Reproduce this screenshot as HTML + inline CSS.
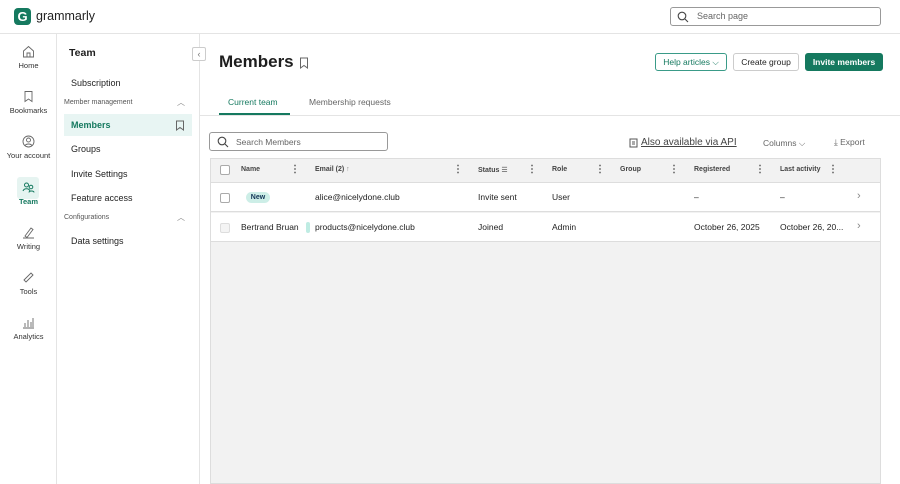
<!DOCTYPE html>
<html><head><style>
*{box-sizing:border-box;margin:0;padding:0}
body{width:900px;height:484px;overflow:hidden;font-family:"Liberation Sans",sans-serif;background:#fff;color:#1e1e1e;position:relative}
.abs{position:absolute}
.top{left:0;top:0;width:900px;height:34px;border-bottom:1px solid #e4e4e4}
.rail{left:0;top:34px;width:57px;height:450px;border-right:1px solid #e4e4e4}
.ri{position:absolute;left:0;width:57px;text-align:center;font-size:7.5px;color:#333}
.ri svg{display:block;margin:0 auto 3px}
.side{left:57px;top:34px;width:143px;height:450px;border-right:1px solid #e4e4e4}
.si{position:absolute;left:14px;font-size:9px;color:#222}
.sh{position:absolute;left:7px;font-size:7px;color:#555}
.chev{position:absolute;right:14px;font-size:8px;color:#888}
.btn{position:absolute;top:53px;height:18px;border:1px solid #ccc;border-radius:3px;font-size:8.5px;line-height:16px;text-align:center}
.th{position:absolute;top:166px;font-size:7px;font-weight:bold;color:#444}
.dots{position:absolute;top:164px;font-size:10px;color:#555;font-weight:bold}
.td{position:absolute;font-size:8.5px;color:#222}
.cb{position:absolute;width:10px;height:10px;border:1px solid #aaa;border-radius:2px;background:#fff}
</style></head><body>
<div class="abs top">
  <div class="abs" style="left:14px;top:8px;width:17px;height:17px;background:#15795f;border-radius:4px;color:#fff;font-weight:bold;font-size:13px;text-align:center;line-height:17px">G</div>
  <div class="abs" style="left:36px;top:9px;font-size:12.5px;color:#222">grammarly</div>
  <div class="abs" style="left:670px;top:7px;width:211px;height:19px;border:1px solid #999;border-radius:3px">
    <svg class="abs" style="left:6px;top:3px" width="12" height="12" viewBox="0 0 12 12"><circle cx="5" cy="5" r="3.8" fill="none" stroke="#444" stroke-width="1.1"/><path d="M8 8l3 3" stroke="#444" stroke-width="1.1"/></svg>
    <div class="abs" style="left:26px;top:3px;font-size:9px;color:#666">Search page</div>
  </div>
</div>
<div class="abs rail">
  <div class="ri" style="top:11px"><svg width="13" height="13" viewBox="0 0 13 13"><path d="M1.5 6L6.5 1.5 11.5 6V12H1.5Z M5 12V8h3v4" fill="none" stroke="#666" stroke-width="0.9"/></svg>Home</div>
  <div class="ri" style="top:56px"><svg width="13" height="13" viewBox="0 0 13 13"><path d="M3 1.5h7v10l-3.5-2.5L3 11.5Z" fill="none" stroke="#666" stroke-width="0.9"/></svg>Bookmarks</div>
  <div class="ri" style="top:101px"><svg width="13" height="13" viewBox="0 0 13 13"><circle cx="6.5" cy="6.5" r="5.5" fill="none" stroke="#666" stroke-width="0.9"/><circle cx="6.5" cy="5" r="2" fill="none" stroke="#666" stroke-width="0.9"/><path d="M3 10.5c1.5-2 5.5-2 7 0" fill="none" stroke="#666" stroke-width="0.9"/></svg>Your account</div>
  <div class="abs" style="left:17px;top:143px;width:22px;height:22px;background:#e6f4f1;border-radius:3px"></div>
  <div class="ri" style="top:147px;color:#15795f;font-weight:bold"><svg width="13" height="13" viewBox="0 0 13 13"><circle cx="4.5" cy="4" r="2" fill="none" stroke="#15795f"/><circle cx="9" cy="6" r="1.8" fill="none" stroke="#15795f"/><path d="M1 10c1-3 6-3 7 0M7 11.5c0-2 5-2 5 0" fill="none" stroke="#15795f"/></svg>Team</div>
  <div class="ri" style="top:192px"><svg width="13" height="13" viewBox="0 0 13 13"><path d="M3 10L9 2l2 1.5-6 8zM1 12h11" fill="none" stroke="#666" stroke-width="0.9"/></svg>Writing</div>
  <div class="ri" style="top:237px"><svg width="13" height="13" viewBox="0 0 13 13"><path d="M2 9l7-7 2 2-7 7zM4 11l7-7" fill="none" stroke="#666" stroke-width="0.9"/></svg>Tools</div>
  <div class="ri" style="top:282px"><svg width="13" height="13" viewBox="0 0 13 13"><path d="M1 12h11M3 11V7M6 11V4M9 11V6M11 11V2" fill="none" stroke="#666" stroke-width="0.9"/></svg>Analytics</div>
</div>
<div class="abs side">
  <div class="abs" style="left:12px;top:13px;font-size:10.5px;font-weight:bold">Team</div>
  <div class="abs" style="left:135px;top:13px;width:14px;height:14px;border:1px solid #ccc;border-radius:2px;background:#fff;font-size:9px;color:#777;text-align:center;line-height:12px">‹</div>
  <div class="si" style="top:44px">Subscription</div>
  <div class="sh" style="top:65px">Member management</div><div class="chev" style="top:63px">︿</div>
  <div class="abs" style="left:7px;top:80px;width:128px;height:22px;background:#e8f5f3"></div>
  <div class="si" style="top:86px;color:#15795f;font-weight:bold">Members</div>
  <svg class="abs" style="left:118px;top:86px" width="10" height="11" viewBox="0 0 10 11"><path d="M1.5 1h7v9l-3.5-2.5L1.5 10Z" fill="none" stroke="#666"/></svg>
  <div class="si" style="top:110px">Groups</div>
  <div class="si" style="top:135px">Invite Settings</div>
  <div class="si" style="top:159px">Feature access</div>
  <div class="sh" style="top:180px">Configurations</div><div class="chev" style="top:178px">︿</div>
  <div class="si" style="top:202px">Data settings</div>
</div>
<div class="abs" style="left:219px;top:52px;font-size:17px;font-weight:bold">Members</div>
<svg class="abs" style="left:299px;top:57px" width="10" height="12" viewBox="0 0 10 12"><path d="M1.5 1h7v10l-3.5-2.5L1.5 11Z" fill="none" stroke="#666"/></svg>
<div class="btn" style="left:655px;width:72px;border-color:#3a9b88;color:#15795f">Help articles ⌵</div>
<div class="btn" style="left:733px;width:66px">Create group</div>
<div class="btn" style="left:805px;width:78px;background:#15795f;border-color:#15795f;color:#fff;font-weight:bold">Invite members</div>
<div class="abs" style="left:228px;top:97px;font-size:8.5px;color:#15795f">Current team</div>
<div class="abs" style="left:219px;top:113px;width:71px;height:2px;background:#15795f"></div>
<div class="abs" style="left:309px;top:97px;font-size:8.5px;color:#666">Membership requests</div>
<div class="abs" style="left:200px;top:115px;width:700px;height:1px;background:#e4e4e4"></div>
<div class="abs" style="left:209px;top:132px;width:179px;height:19px;border:1px solid #999;border-radius:3px">
  <svg class="abs" style="left:7px;top:3px" width="12" height="12" viewBox="0 0 12 12"><circle cx="5" cy="5" r="3.8" fill="none" stroke="#444" stroke-width="1.1"/><path d="M8 8l3 3" stroke="#444" stroke-width="1.1"/></svg>
  <div class="abs" style="left:26px;top:4px;font-size:8.5px;color:#666">Search Members</div>
</div>
<svg class="abs" style="left:629px;top:138px" width="9" height="10" viewBox="0 0 9 10"><rect x="1" y="1" width="7" height="8" fill="none" stroke="#555"/><path d="M3 4h3M3 6h3" stroke="#555"/></svg>
<div class="abs" style="left:641px;top:137px;font-size:10px;color:#444;text-decoration:underline">Also available via API</div>
<div class="abs" style="left:763px;top:138px;font-size:8.5px;color:#666">Columns ⌵</div>
<div class="abs" style="left:834px;top:137px;font-size:8.5px;color:#666">⤓ Export</div>
<div class="abs" style="left:210px;top:158px;width:671px;height:326px;border:1px solid #ddd;background:#f2f2f2"></div>
<div class="abs" style="left:211px;top:159px;width:669px;height:24px;background:#f2f2f2;border-bottom:1px solid #ddd"></div>
<div class="cb" style="left:220px;top:165px"></div>
<div class="th" style="left:241px">Name</div><div class="dots" style="left:290px">⋮</div>
<div class="th" style="left:315px">Email (2) <span style="font-weight:normal;color:#888">↑</span></div><div class="dots" style="left:453px">⋮</div>
<div class="th" style="left:478px">Status <span style="font-weight:normal">☰</span></div><div class="dots" style="left:527px">⋮</div>
<div class="th" style="left:552px">Role</div><div class="dots" style="left:595px">⋮</div>
<div class="th" style="left:620px">Group</div><div class="dots" style="left:669px">⋮</div>
<div class="th" style="left:694px">Registered</div><div class="dots" style="left:755px">⋮</div>
<div class="th" style="left:780px">Last activity</div><div class="dots" style="left:828px">⋮</div>
<div class="abs" style="left:211px;top:183px;width:669px;height:29px;background:#fff;border-bottom:1px solid #ddd"></div>
<div class="abs" style="left:211px;top:213px;width:669px;height:29px;background:#fff;border-bottom:1px solid #ddd"></div>
<div class="cb" style="left:220px;top:193px"></div>
<div class="abs" style="left:246px;top:192px;width:24px;height:11px;border-radius:6px;background:#cdeee7;font-size:7px;font-weight:bold;color:#135;text-align:center;line-height:11px">New</div>
<div class="td" style="left:315px;top:192px">alice@nicelydone.club</div>
<div class="td" style="left:478px;top:192px">Invite sent</div>
<div class="td" style="left:552px;top:192px">User</div>
<div class="td" style="left:694px;top:192px">–</div>
<div class="td" style="left:780px;top:192px">–</div>
<div class="td" style="left:857px;top:190px;color:#888;font-size:11px">›</div>
<div class="cb" style="left:220px;top:223px;border-color:#ddd;background:#f4f4f4"></div>
<div class="td" style="left:241px;top:222px">Bertrand Bruan</div>
<div class="abs" style="left:306px;top:222px;width:4px;height:11px;border-radius:3px;background:#bfece3"></div>
<div class="td" style="left:315px;top:222px">products@nicelydone.club</div>
<div class="td" style="left:478px;top:222px">Joined</div>
<div class="td" style="left:552px;top:222px">Admin</div>
<div class="td" style="left:694px;top:222px">October 26, 2025</div>
<div class="td" style="left:780px;top:222px">October 26, 20...</div>
<div class="td" style="left:857px;top:220px;color:#888;font-size:11px">›</div>
</body></html>
